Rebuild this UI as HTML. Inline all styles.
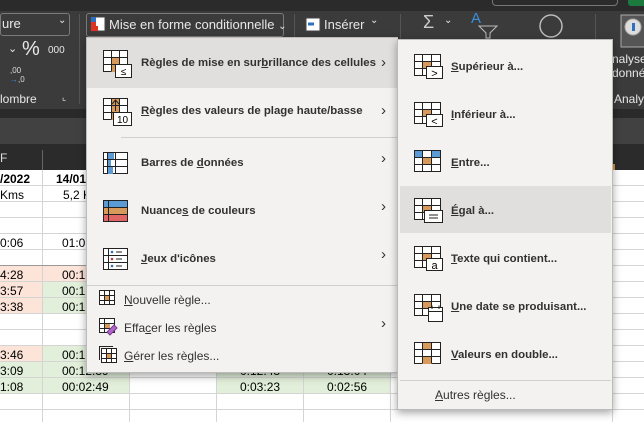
<!DOCTYPE html>
<html><head><meta charset="utf-8"><style>
*{margin:0;padding:0;box-sizing:border-box}
body{width:644px;height:422px;overflow:hidden;position:relative;background:#fff;font-family:"Liberation Sans",sans-serif;}
.abs{position:absolute}
.t{position:absolute;font-size:12px;color:#000;white-space:nowrap}
.menu{position:absolute;background:#f3f2f1;border:1px solid #bdbbb9;box-shadow:0 3px 8px rgba(0,0,0,.35)}
.mi{position:absolute;font-size:11.4px;font-weight:bold;color:#323130;white-space:nowrap}
.ms{position:absolute;font-size:12px;color:#323130;white-space:nowrap}
.chev{position:absolute;font-size:15px;color:#323130}
.rib{position:absolute;color:#e8e8e8;font-size:13px;white-space:nowrap}
svg{position:absolute}
</style></head><body>
<div class="abs" style="left:0;top:0;width:644px;height:11px;background:#2b2b2b"></div>
<div class="abs" style="left:492px;top:-6px;width:126px;height:12px;border:1px solid #777;border-radius:4px"></div>
<div class="abs" style="left:628px;top:-4px;width:20px;height:10px;background:#1d7a3e;border-radius:3px"></div>
<div class="abs" style="left:0;top:11px;width:644px;height:98px;background:#3b3b3b"></div>
<div class="abs" style="left:0;top:13px;width:70px;height:23px;border:1px solid #7a7a7a;border-radius:3px"></div>
<div class="rib" style="left:2px;top:16px">ure</div><div class="rib" style="left:58px;top:15px;font-size:10px">⌄</div>
<div class="rib" style="left:8px;top:42px;font-size:11px">⌄</div>
<div class="rib" style="left:22px;top:38px;font-size:20px">%</div>
<div class="rib" style="left:48px;top:45px;font-size:10px">000</div>
<div class="rib" style="left:10px;top:66px;font-size:8px;color:#ddd">,00<br><span style="color:#3b8fd8">→</span>,0</div>
<div class="rib" style="left:0;top:92px;font-size:12px">lombre</div>
<div class="rib" style="left:62px;top:92px;font-size:9px">⌞</div>
<div class="abs" style="left:79px;top:14px;width:1px;height:90px;background:#555"></div>
<div class="abs" style="left:86px;top:13px;width:198px;height:24px;border:1px solid #7a7a7a;border-radius:3px"></div>
<svg style="left:90px;top:16px" width="16" height="16"><rect x="1" y="1" width="14" height="14" fill="#fff" stroke="#444"/><rect x="1" y="1" width="5" height="5" fill="#2f6fbf"/><rect x="1" y="10" width="7" height="5" fill="#d32"/><rect x="1" y="6" width="5" height="4" fill="#d32"/></svg>
<div class="rib" style="left:109px;top:17px">Mise en forme conditionnelle <span style="font-size:10px">⌄</span></div>
<div class="abs" style="left:294px;top:14px;width:1px;height:90px;background:#555"></div>
<svg style="left:305px;top:17px" width="16" height="16"><rect x="1" y="1" width="14" height="13" fill="#fff" stroke="#444"/><line x1="3" y1="7" x2="9" y2="7" stroke="#2f6fbf" stroke-width="3"/></svg>
<div class="rib" style="left:324px;top:17px">Insérer</div><div class="rib" style="left:370px;top:15px;font-size:10px">⌄</div>
<div class="abs" style="left:400px;top:14px;width:1px;height:90px;background:#555"></div>
<div class="rib" style="left:423px;top:12px;font-size:18px;color:#ccc">Σ</div><div class="rib" style="left:444px;top:15px;font-size:10px">⌄</div>
<div class="rib" style="left:471px;top:10px;font-size:15px;color:#3b8fd8">A</div>
<svg style="left:478px;top:25px" width="20" height="14"><path d="M1 1 L19 1 L12 8 L12 13 L8 13 L8 8 Z" fill="none" stroke="#bbb"/></svg>
<svg style="left:536px;top:12px" width="30" height="28"><circle cx="15" cy="14" r="11" fill="none" stroke="#bbb" stroke-width="1.5"/></svg>
<div class="abs" style="left:595px;top:14px;width:1px;height:90px;background:#555"></div>
<svg style="left:620px;top:14px" width="26" height="34"><rect x="1" y="1" width="24" height="32" fill="#555" stroke="#aaa"/><circle cx="13" cy="13" r="8" fill="#ddd" stroke="#aaa"/><rect x="12" y="9" width="3" height="8" fill="#2f6fbf"/></svg>
<div class="rib" style="left:612px;top:52px;font-size:12px">nalyse<br>donné</div>
<div class="rib" style="left:614px;top:92px;font-size:12px">Analys</div>
<div class="abs" style="left:0;top:109px;width:644px;height:9px;background:#2a2a2a"></div>
<div class="abs" style="left:0;top:118px;width:644px;height:26px;background:#414141"></div>
<div class="abs" style="left:0;top:144px;width:644px;height:26px;background:#2b2b2b"></div>
<div class="abs" style="left:42px;top:150px;width:1px;height:20px;background:#666"></div>
<div class="t" style="left:0;top:151px;color:#ddd">F</div>
<div class="abs" style="left:612px;top:164px;width:3px;height:6px;background:#d89540"></div>
<svg style="left:0;top:170px" width="644" height="252">
<g fill="#fde4d9"><rect x="0" y="96" width="42" height="48"/><rect x="0" y="176" width="42" height="16"/><rect x="42" y="96" width="88" height="16"/></g>
<g fill="#e2efda"><rect x="42" y="112" width="88" height="32"/><rect x="42" y="176" width="88" height="16"/><rect x="0" y="192" width="42" height="32"/><rect x="42" y="192" width="88" height="32"/><rect x="216" y="192" width="174" height="32"/></g>
<g stroke="#d4d4d4" stroke-width="1">
<path d="M0 15.5H644M0 31.5H644M0 47.5H644M0 63.5H644M0 79.5H644M0 95.5H644M0 111.5H644M0 127.5H644M0 143.5H644M0 159.5H644M0 175.5H644M0 191.5H644M0 207.5H644M0 223.5H644M0 239.5H644"/>
<path d="M42.5 0V252M129.5 0V252M216.5 0V252M303.5 0V252M390.5 0V252M612.5 0V252"/>
</g>
<path d="M0 95.5H130" stroke="#999"/>
</svg>
<div class="t" style="left:0;top:172px;font-weight:bold">/2022</div>
<div class="t" style="left:56px;top:172px;font-weight:bold">14/01</div>
<div class="t" style="left:0;top:188px">Kms</div><div class="t" style="left:63px;top:188px">5,2 K</div>
<div class="t" style="left:0;top:236px">0:06</div><div class="t" style="left:62px;top:236px">01:0</div>
<div class="t" style="left:0;top:268px">4:28</div><div class="t" style="left:62px;top:268px">00:1</div>
<div class="t" style="left:0;top:284px">3:57</div><div class="t" style="left:62px;top:284px">00:1</div>
<div class="t" style="left:0;top:300px">3:38</div><div class="t" style="left:62px;top:300px">00:1</div>
<div class="t" style="left:0;top:348px">3:46</div><div class="t" style="left:62px;top:348px">00:1</div>
<div class="t" style="left:0;top:364px">3:09</div><div class="t" style="left:62px;top:364px">00:12:39</div>
<div class="t" style="left:0;top:380px">1:08</div><div class="t" style="left:62px;top:380px">00:02:49</div>
<div class="t" style="left:240px;top:364px">0:12:48</div><div class="t" style="left:327px;top:364px">0:13:04</div>
<div class="t" style="left:240px;top:380px">0:03:23</div><div class="t" style="left:327px;top:380px">0:02:56</div>

<div class="menu" style="left:86px;top:37px;width:312px;height:336px">
<div class="abs" style="left:0;top:0;width:311px;height:50px;background:#e1dfdd"></div>
<div class="abs" style="left:34px;top:99px;width:276px;height:1px;background:#d2d0ce"></div>
<div class="abs" style="left:0;top:247px;width:310px;height:1px;background:#d2d0ce"></div>
</div>
<svg style="left:102px;top:49px" width="32" height="32"><rect x="1.5" y="1.5" width="24" height="21" fill="#fff" stroke="#222"/><rect x="9" y="9" width="8" height="14" fill="#d89a5a"/><path d="M1.5 8.5H25.5M1.5 15.5H25.5M9.5 1.5V22.5M17.5 1.5V22.5" stroke="#222" fill="none"/><rect x="13.5" y="15.5" width="16" height="13" fill="#fff" stroke="#222"/><text x="21.5" y="26" font-size="10" text-anchor="middle" font-family="Liberation Sans">≤</text></svg>
<div class="mi" style="left:141px;top:57px">Règles de mise en sur<u>b</u>rillance des cellules</div><div class="chev" style="left:381px;top:54px">›</div>
<svg style="left:102px;top:97px" width="32" height="32"><rect x="1.5" y="1.5" width="24" height="21" fill="#fff" stroke="#222"/><rect x="9" y="2" width="9" height="21" fill="#d89a5a"/><path d="M1.5 8.5H25.5M1.5 15.5H25.5M9.5 1.5V22.5M17.5 1.5V22.5" stroke="#222" fill="none"/><path d="M13.5 14V3M10 7L13.5 3L17 7" stroke="#222" fill="none"/><rect x="11.5" y="15.5" width="18" height="13" fill="#fff" stroke="#222"/><text x="20.5" y="26" font-size="10" text-anchor="middle" font-family="Liberation Sans">10</text></svg>
<div class="mi" style="left:141px;top:105px"><u>R</u>ègles des valeurs de plage haute/basse</div><div class="chev" style="left:381px;top:102px">›</div>
<svg style="left:102px;top:151px" width="32" height="26"><rect x="1.5" y="1.5" width="24" height="21" fill="#fff" stroke="#222"/><rect x="6" y="2" width="6" height="7" fill="#5b9bd5"/><rect x="6" y="9" width="3" height="7" fill="#5b9bd5"/><rect x="6" y="16" width="5" height="7" fill="#5b9bd5"/><path d="M1.5 8.5H25.5M1.5 15.5H25.5M5.5 1.5V22.5M13.5 1.5V22.5" stroke="#222" fill="none"/></svg>
<div class="mi" style="left:141px;top:157px">Barres de <u>d</u>onnées</div><div class="chev" style="left:381px;top:150px">›</div>
<svg style="left:102px;top:199px" width="32" height="26"><rect x="2" y="2" width="23" height="7" fill="#5b9bd5"/><rect x="2" y="9" width="23" height="7" fill="#d89a5a"/><rect x="2" y="16" width="23" height="7" fill="#e06666"/><rect x="1.5" y="1.5" width="24" height="21" fill="none" stroke="#222"/><path d="M1.5 8.5H25.5M1.5 15.5H25.5M6.5 1.5V22.5" stroke="#222" fill="none"/></svg>
<div class="mi" style="left:141px;top:205px">Nuance<u>s</u> de couleurs</div><div class="chev" style="left:381px;top:198px">›</div>
<svg style="left:102px;top:247px" width="32" height="26"><rect x="1.5" y="1.5" width="24" height="21" fill="#fff" stroke="#222"/><path d="M1.5 8.5H25.5M1.5 15.5H25.5M6.5 1.5V22.5M14 5H20M14 12H20M14 19H20" stroke="#222" fill="none"/><circle cx="10" cy="5" r="1.3" fill="#2f6fbf"/><circle cx="10" cy="12" r="1.3" fill="#c33"/><circle cx="10" cy="19" r="1.3" fill="#2f6fbf"/></svg>
<div class="mi" style="left:141px;top:253px"><u>J</u>eux d'icônes</div><div class="chev" style="left:381px;top:246px">›</div>
<svg style="left:99px;top:290px" width="20" height="18"><rect x="0.5" y="0.5" width="15" height="14" fill="#fff" stroke="#222"/><rect x="5" y="5" width="6" height="5" fill="#d89a5a"/><path d="M0.5 5.5H15.5M0.5 10.5H15.5M5.5 0.5V14.5M10.5 0.5V14.5" stroke="#222" fill="none"/></svg>
<div class="ms" style="left:124px;top:293px"><u>N</u>ouvelle règle...</div>
<svg style="left:99px;top:318px" width="20" height="18"><rect x="0.5" y="0.5" width="15" height="14" fill="#fff" stroke="#222"/><rect x="5" y="5" width="6" height="5" fill="#d89a5a"/><path d="M0.5 5.5H15.5M0.5 10.5H15.5M5.5 0.5V14.5" stroke="#222" fill="none"/><path d="M8 14L15 7L18 10L11 17Z" fill="#b066c8" stroke="#7a3a90"/></svg>
<div class="ms" style="left:124px;top:321px">Effa<u>c</u>er les règles</div><div class="chev" style="left:381px;top:315px">›</div>
<svg style="left:99px;top:346px" width="20" height="18"><rect x="2.5" y="2.5" width="15" height="14" fill="#fff" stroke="#222"/><path d="M0.5 14V0.5H14" stroke="#222" fill="none"/><rect x="7" y="7" width="6" height="5" fill="#d89a5a"/><path d="M2.5 7.5H17.5M2.5 12.5H17.5M7.5 2.5V16.5M12.5 2.5V16.5" stroke="#222" fill="none"/></svg>
<div class="ms" style="left:124px;top:349px"><u>G</u>érer les règles...</div>

<div class="menu" style="left:397px;top:39px;width:216px;height:371px">
<div class="abs" style="left:2px;top:146px;width:211px;height:47px;background:#e1dfdd"></div>
<div class="abs" style="left:2px;top:340px;width:211px;height:1px;background:#d2d0ce"></div>
</div>
<svg style="left:413px;top:53px" width="34" height="32"><rect x="1.5" y="1.5" width="26" height="21" fill="#fff" stroke="#222"/><rect x="9" y="9" width="10" height="7" fill="#d89a5a"/><path d="M1.5 8.5H27.5M1.5 15.5H27.5M9.5 1.5V22.5M18.5 1.5V22.5" stroke="#222" fill="none"/><rect x="13.5" y="13.5" width="16" height="12" fill="#fff" stroke="#222"/><text x="21.5" y="24" font-size="11" text-anchor="middle" font-family="Liberation Sans">&gt;</text></svg>
<div class="mi" style="left:451px;top:61px"><u>S</u>upérieur à...</div>
<svg style="left:413px;top:101px" width="34" height="32"><rect x="1.5" y="1.5" width="26" height="21" fill="#fff" stroke="#222"/><rect x="9" y="9" width="10" height="7" fill="#d89a5a"/><path d="M1.5 8.5H27.5M1.5 15.5H27.5M9.5 1.5V22.5M18.5 1.5V22.5" stroke="#222" fill="none"/><rect x="13.5" y="13.5" width="16" height="12" fill="#fff" stroke="#222"/><text x="21.5" y="24" font-size="11" text-anchor="middle" font-family="Liberation Sans">&lt;</text></svg>
<div class="mi" style="left:451px;top:109px"><u>I</u>nférieur à...</div>
<svg style="left:413px;top:149px" width="34" height="28"><rect x="1.5" y="1.5" width="26" height="21" fill="#fff" stroke="#222"/><rect x="2" y="2" width="7" height="7" fill="#5b9bd5"/><rect x="19" y="2" width="8" height="7" fill="#5b9bd5"/><rect x="9" y="9" width="10" height="7" fill="#d89a5a"/><path d="M1.5 8.5H27.5M1.5 15.5H27.5M9.5 1.5V22.5M18.5 1.5V22.5" stroke="#222" fill="none"/></svg>
<div class="mi" style="left:451px;top:157px"><u>E</u>ntre...</div>
<svg style="left:413px;top:197px" width="34" height="32"><rect x="1.5" y="1.5" width="26" height="21" fill="#fff" stroke="#222"/><rect x="9" y="9" width="10" height="7" fill="#d89a5a"/><path d="M1.5 8.5H27.5M1.5 15.5H27.5M9.5 1.5V22.5M18.5 1.5V22.5" stroke="#222" fill="none"/><rect x="11.5" y="13.5" width="18" height="12" fill="#fff" stroke="#222"/><path d="M16 18H25M16 21H25" stroke="#222"/></svg>
<div class="mi" style="left:451px;top:205px"><u>É</u>gal à...</div>
<svg style="left:413px;top:245px" width="34" height="32"><rect x="1.5" y="1.5" width="26" height="21" fill="#fff" stroke="#222"/><rect x="9" y="9" width="10" height="7" fill="#d89a5a"/><path d="M1.5 8.5H27.5M1.5 15.5H27.5M9.5 1.5V22.5M18.5 1.5V22.5" stroke="#222" fill="none"/><rect x="13.5" y="13.5" width="16" height="12" fill="#fff" stroke="#222"/><text x="21.5" y="24" font-size="11" text-anchor="middle" font-family="Liberation Sans">a</text></svg>
<div class="mi" style="left:451px;top:253px"><u>T</u>exte qui contient...</div>
<svg style="left:413px;top:293px" width="34" height="34"><rect x="1.5" y="1.5" width="26" height="21" fill="#fff" stroke="#222"/><rect x="9" y="9" width="10" height="7" fill="#d89a5a"/><path d="M1.5 8.5H27.5M1.5 15.5H27.5M9.5 1.5V22.5M18.5 1.5V22.5" stroke="#222" fill="none"/><rect x="15.5" y="14.5" width="14" height="14" fill="#fff" stroke="#222"/><path d="M15.5 18.5H29.5M19 12.5V16M26 12.5V16" stroke="#222"/></svg>
<div class="mi" style="left:451px;top:301px"><u>U</u>ne date se produisant...</div>
<svg style="left:413px;top:341px" width="34" height="28"><rect x="1.5" y="1.5" width="26" height="21" fill="#fff" stroke="#222"/><rect x="9" y="2" width="10" height="7" fill="#d89a5a"/><rect x="9" y="16" width="10" height="7" fill="#d89a5a"/><path d="M1.5 8.5H27.5M1.5 15.5H27.5M9.5 1.5V22.5M18.5 1.5V22.5" stroke="#222" fill="none"/></svg>
<div class="mi" style="left:451px;top:349px"><u>V</u>aleurs en double...</div>
<div class="ms" style="left:435px;top:388px"><u>A</u>utres règles...</div>
</body></html>
